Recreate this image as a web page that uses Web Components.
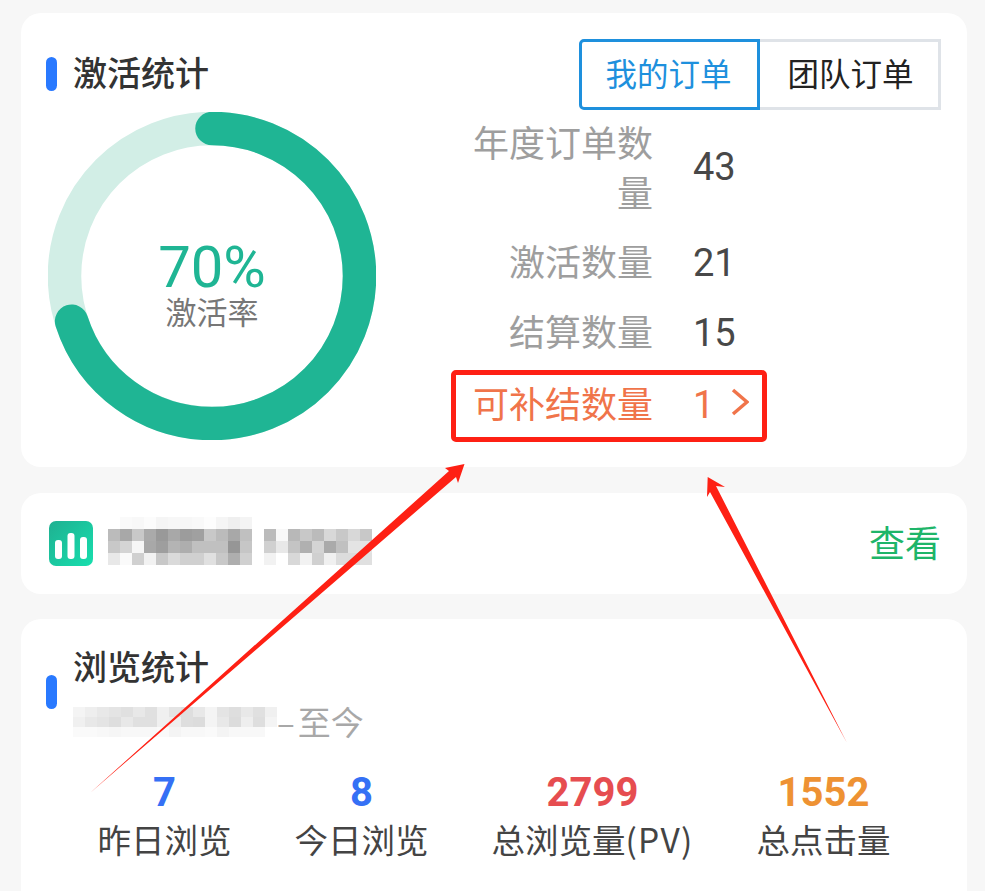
<!DOCTYPE html>
<html>
<head>
<meta charset="utf-8">
<style>
  html, body { margin: 0; height: 891px; overflow: hidden; background: #f7f7f7; }
  body { font-family: "Noto Sans CJK SC", "Noto Sans", sans-serif; position: relative; }
  main { display: flex; flex-direction: column; gap: 25px; padding: 13px 18px 0 21px; }
  .activation { margin-bottom: 1px; }
  .browse { border-radius: 20px 20px 0 0; }
</style>
</head>
<body>
<main>
  <stat-card class="activation">
    <section-title slot="head">激活统计</section-title>
    <order-tabs slot="side"></order-tabs>
    <activation-body></activation-body>
  </stat-card>
  <report-bar></report-bar>
  <stat-card class="browse">
    <browse-body></browse-body>
  </stat-card>
</main>
<red-arrows></red-arrows>

<script>
function shadow(el, html) {
  el.attachShadow({ mode: 'open' }).innerHTML = html;
}

class StatCard extends HTMLElement {
  connectedCallback() {
    const head = this.querySelector('[slot]') ? '<div class="top"><slot name="head"></slot><slot name="side"></slot></div>' : '';
    shadow(this, `
      <style>
        :host { display: block; background: #fff; border-radius: 20px; }
        .top { display: flex; justify-content: space-between; align-items: flex-start; padding: 26px 26px 0 25px; }
      </style>
      ${head}
      <slot></slot>`);
  }
}

class SectionTitle extends HTMLElement {
  connectedCallback() {
    shadow(this, `
      <style>
        :host { display: flex; align-items: center; gap: 16px; height: 70px; font-size: 34px; font-weight: 500; color: #333; }
        i { width: 11px; height: 34px; border-radius: 6px; background: #2979ff; }
        span { padding-bottom: 6px; }
      </style>
      <i></i><span><slot></slot></span>`);
  }
}

class OrderTabs extends HTMLElement {
  connectedCallback() {
    shadow(this, `
      <style>
        :host { display: flex; font-size: 31.5px; }
        span { width: 181px; height: 71px; box-sizing: border-box; display: flex; align-items: center; justify-content: center; padding-bottom: 6px; }
        .on { color: #1e90dd; border: 3px solid #1e90dd; border-radius: 5px 0 0 5px; padding-right: 2px; }
        .off { color: #222; border: 3px solid #dfe3e8; border-left: 0; padding-left: 3px; }
      </style>
      <span class="on">我的订单</span><span class="off">团队订单</span>`);
  }
}

class ActivationBody extends HTMLElement {
  connectedCallback() {
    shadow(this, `
      <style>
        :host { display: flex; height: 357px; }
        .left { width: 382px; flex: none; padding: 2px 0 0 27px; box-sizing: border-box; }
        .right { padding: 6px 0 0 70px; }
      </style>
      <div class="left"><progress-ring value="70" label="激活率"></progress-ring></div>
      <div class="right">
        <stat-row label="年度订单数量" value="43" tall></stat-row>
        <stat-row label="激活数量" value="21" style="margin-top: 9px"></stat-row>
        <stat-row label="结算数量" value="15" style="height: 69px"></stat-row>
        <stat-row label="可补结数量" value="1" link style="margin-top: 3px"></stat-row>
      </div>`);
  }
}

class ProgressRing extends HTMLElement {
  connectedCallback() {
    const value = +this.getAttribute('value');
    const r = 147.5;
    const len = 2 * Math.PI * r;
    shadow(this, `
      <style>
        :host { display: block; position: relative; width: 328px; height: 328px; }
        svg { display: block; }
        .mid { position: absolute; inset: 0; padding-top: 17px; display: flex; flex-direction: column; align-items: center; justify-content: center; }
        b { font: 400 58px/50px Roboto, sans-serif; color: #1fb594; }
        span { font-size: 31px; line-height: 34px; color: #777; margin-top: 2px; }
      </style>
      <svg width="328" height="328" viewBox="0 0 328 328" fill="none" stroke-width="33.5">
        <circle cx="164" cy="164" r="${r}" stroke="#d2eee6"/>
        <circle cx="164" cy="164" r="${r}" stroke="#1fb594" stroke-linecap="round"
          stroke-dasharray="${len * value / 100} ${len}" transform="rotate(-90 164 164)"/>
      </svg>
      <div class="mid"><b>${value}%</b><span>${this.getAttribute('label')}</span></div>`);
  }
}

class StatRow extends HTMLElement {
  connectedCallback() {
    const link = this.hasAttribute('link');
    const tall = this.hasAttribute('tall');
    shadow(this, `
      <style>
        :host { display: flex; align-items: center; height: ${tall ? 100 : 70}px; color: ${link ? '#f0744a' : '#484848'}; }
        label { width: 180px; text-align: right; font-size: 36px; line-height: 50px; color: ${link ? '#f0744a' : '#9e9e9e'}; }
        b { font: 400 38px Roboto, sans-serif; margin: ${tall ? 2 : 6}px 0 0 40px; }
        svg { margin-left: 17px; }
      </style>
      <label>${this.getAttribute('label')}</label>
      <b>${this.getAttribute('value')}</b>
      ${link ? '<svg width="18" height="28" viewBox="0 0 18 28" fill="none" stroke="#f0744a" stroke-width="3.5"><path d="M2 2l14 12L2 26"/></svg>' : ''}`);
  }
}

class MosaicBlock extends HTMLElement {
  connectedCallback() {
    const rows = this.textContent.trim().split(/\s+/).map(r => r.split(','));
    const cell = +this.getAttribute('cell') || 12;
    const h = +this.getAttribute('row') || cell;
    let rects = '';
    rows.forEach((row, y) => row.forEach((g, x) => {
      rects += `<rect x="${x * cell}" y="${y * h}" width="${cell + 0.5}" height="${h + 0.5}" fill="#${g}"/>`;
    }));
    const w = rows[0].length * cell;
    shadow(this, `
      <style>:host { display: block; } svg { display: block; }</style>
      <svg width="${w}" height="${rows.length * h}">${rects}</svg>`);
  }
}

class ReportBar extends HTMLElement {
  connectedCallback() {
    shadow(this, `
      <style>
        :host { display: flex; align-items: center; height: 101px; background: #fff; border-radius: 20px; padding: 0 26px 0 28px; }
        .blur { display: flex; gap: 12px; margin: -6px 0 0 15px; flex: 1; }
        a { font-size: 36px; color: #1eb569; padding-bottom: 6px; }
        svg.icon { flex: none; }
      </style>
      <svg class="icon" width="44" height="45" viewBox="0 0 44 45">
        <defs><linearGradient id="g" x1="0" y1="0" x2="1" y2="1"><stop offset="0" stop-color="#1fb091"/><stop offset="1" stop-color="#17dfae"/></linearGradient></defs>
        <rect width="44" height="45" rx="7" fill="url(#g)"/>
        <rect x="6" y="19" width="7" height="19" rx="3" fill="#fff"/>
        <rect x="18.5" y="12" width="7" height="26" rx="3" fill="#fff"/>
        <rect x="31" y="16" width="7" height="22" rx="3" fill="#fff"/>
      </svg>
      <div class="blur">
        <mosaic-block>fff,fafafa,f8f8f8,fcfcfc,f5f5f5,f7f7f7,f7f7f7,f9f9f9,fdfdfd,f5f5f5,efefef,f4f4f4 bbb,a8a8a8,c8c8c8,aaa,999,a8a8a8,9c9c9c,a0a0a0,c8c8c8,bbb,a8a8a8,c0c0c0 c8c8c8,d4d4d4,f6f6f6,a8a8a8,9e9e9e,b4b4b4,aeaeae,c0c0c0,c0c0c0,c0c0c0,969696,c6c6c6 e8e8e8,fafafa,d0d0d0,f2f2f2,c8c8c8,dadada,d0d0d0,d0d0d0,e0e0e0,c8c8c8,aeaeae,d0d0d0</mosaic-block>
        <mosaic-block>fff,fff,fff,fff,fff,fff,fff,fff,fff bbb,f8f8f8,b8b8b8,c8c8c8,bbb,d8d8d8,c8c8c8,d8d8d8,c8c8c8 d0d0d0,e8e8e8,c4c4c4,b0b0b0,d4d4d4,aaa,c0c0c0,e4e4e4,e4e4e4 f2f2f2,fff,d8d8d8,f2f2f2,d0d0d0,f0f0f0,dcdcdc,dcdcdc,e0e0e0</mosaic-block>
      </div>
      <a>查看</a>`);
  }
}

class BrowseBody extends HTMLElement {
  connectedCallback() {
    shadow(this, `
      <style>
        :host { display: block; height: 272px; box-sizing: border-box; padding-top: 22px; overflow: hidden; }
        .head { display: flex; align-items: center; padding-left: 25px; gap: 16px; }
        i { width: 11px; height: 34px; border-radius: 6px; background: #2979ff; }
        h2 { margin: 0 0 10px; font-size: 34px; line-height: 50px; font-weight: 500; color: #333; }
        .date { display: flex; align-items: center; height: 42px; font-size: 33px; color: #a8a8a8; }
        .date span { padding-bottom: 2px; }
        .date em { font-style: normal; letter-spacing: 3px; }
        .nums { display: flex; justify-content: center; gap: 63px; margin-top: 28px; }
        .wide { letter-spacing: 1.2px; }
      </style>
      <div class="head"><i></i><div>
        <h2>浏览统计</h2>
        <div class="date"><mosaic-block row="10">f4f4f4,eee,e8e8e8,e4e4e4,e0e0e0,e8e8e8,e0e0e0,f0f0f0,e4e4e4,dedede,e8e8e8,f4f4f4,e4e4e4,dedede,e8e8e8,e0e0e0,f0f0f0 f0f0f0,e8e8e8,e4e4e4,dedede,e8e8e8,e0e0e0,e0e0e0,f0f0f0,eee,dedede,dcdcdc,f4f4f4,e8e8e8,dcdcdc,eee,dedede,f4f4f4 fafafa,fafafa,f8f8f8,f6f6f6,f8f8f8,f8f8f8,f8f8f8,fafafa,f4f4f4,f8f8f8,f8f8f8,fafafa,f4f4f4,f8f8f8,f8f8f8,f8f8f8,fff</mosaic-block><span><em>–</em>至今</span></div>
      </div></div>
      <div class="nums">
        <big-num value="7" color="#3570f5">昨日浏览</big-num>
        <big-num value="8" color="#3570f5">今日浏览</big-num>
        <big-num value="2799" color="#e64d50">总浏览量<span class="wide">(PV)</span></big-num>
        <big-num value="1552" color="#ee9233">总点击量</big-num>
      </div>`);
  }
}

class BigNum extends HTMLElement {
  connectedCallback() {
    shadow(this, `
      <style>
        :host { display: flex; flex-direction: column; align-items: center; color: #444; font-size: 33.5px; line-height: 48px; }
        b { font: 700 40px/44px Roboto, sans-serif; color: ${this.getAttribute('color')}; }
      </style>
      <b>${this.getAttribute('value')}</b><div><slot></slot></div>`);
  }
}

class RedArrows extends HTMLElement {
  connectedCallback() {
    shadow(this, `
      <style>
        :host { position: absolute; inset: 0; pointer-events: none; }
        .box { position: absolute; left: 451px; top: 370px; width: 316px; height: 72px; box-sizing: border-box; border: 5px solid #fe2014; border-radius: 5px; }
        svg { position: absolute; left: 0; top: 0; }
      </style>
      <div class="box"></div>
      <svg width="985" height="891" fill="#fe2014">
        <polygon points="90,793 449,471 445,468 464.5,464 458,483 456,477"/>
        <polygon points="847,743 716,486 725,487 707.7,477 707,497 710,492"/>
      </svg>`);
  }
}

customElements.define('stat-card', StatCard);
customElements.define('section-title', SectionTitle);
customElements.define('order-tabs', OrderTabs);
customElements.define('activation-body', ActivationBody);
customElements.define('progress-ring', ProgressRing);
customElements.define('stat-row', StatRow);
customElements.define('mosaic-block', MosaicBlock);
customElements.define('report-bar', ReportBar);
customElements.define('browse-body', BrowseBody);
customElements.define('big-num', BigNum);
customElements.define('red-arrows', RedArrows);
</script>
</body>
</html>
